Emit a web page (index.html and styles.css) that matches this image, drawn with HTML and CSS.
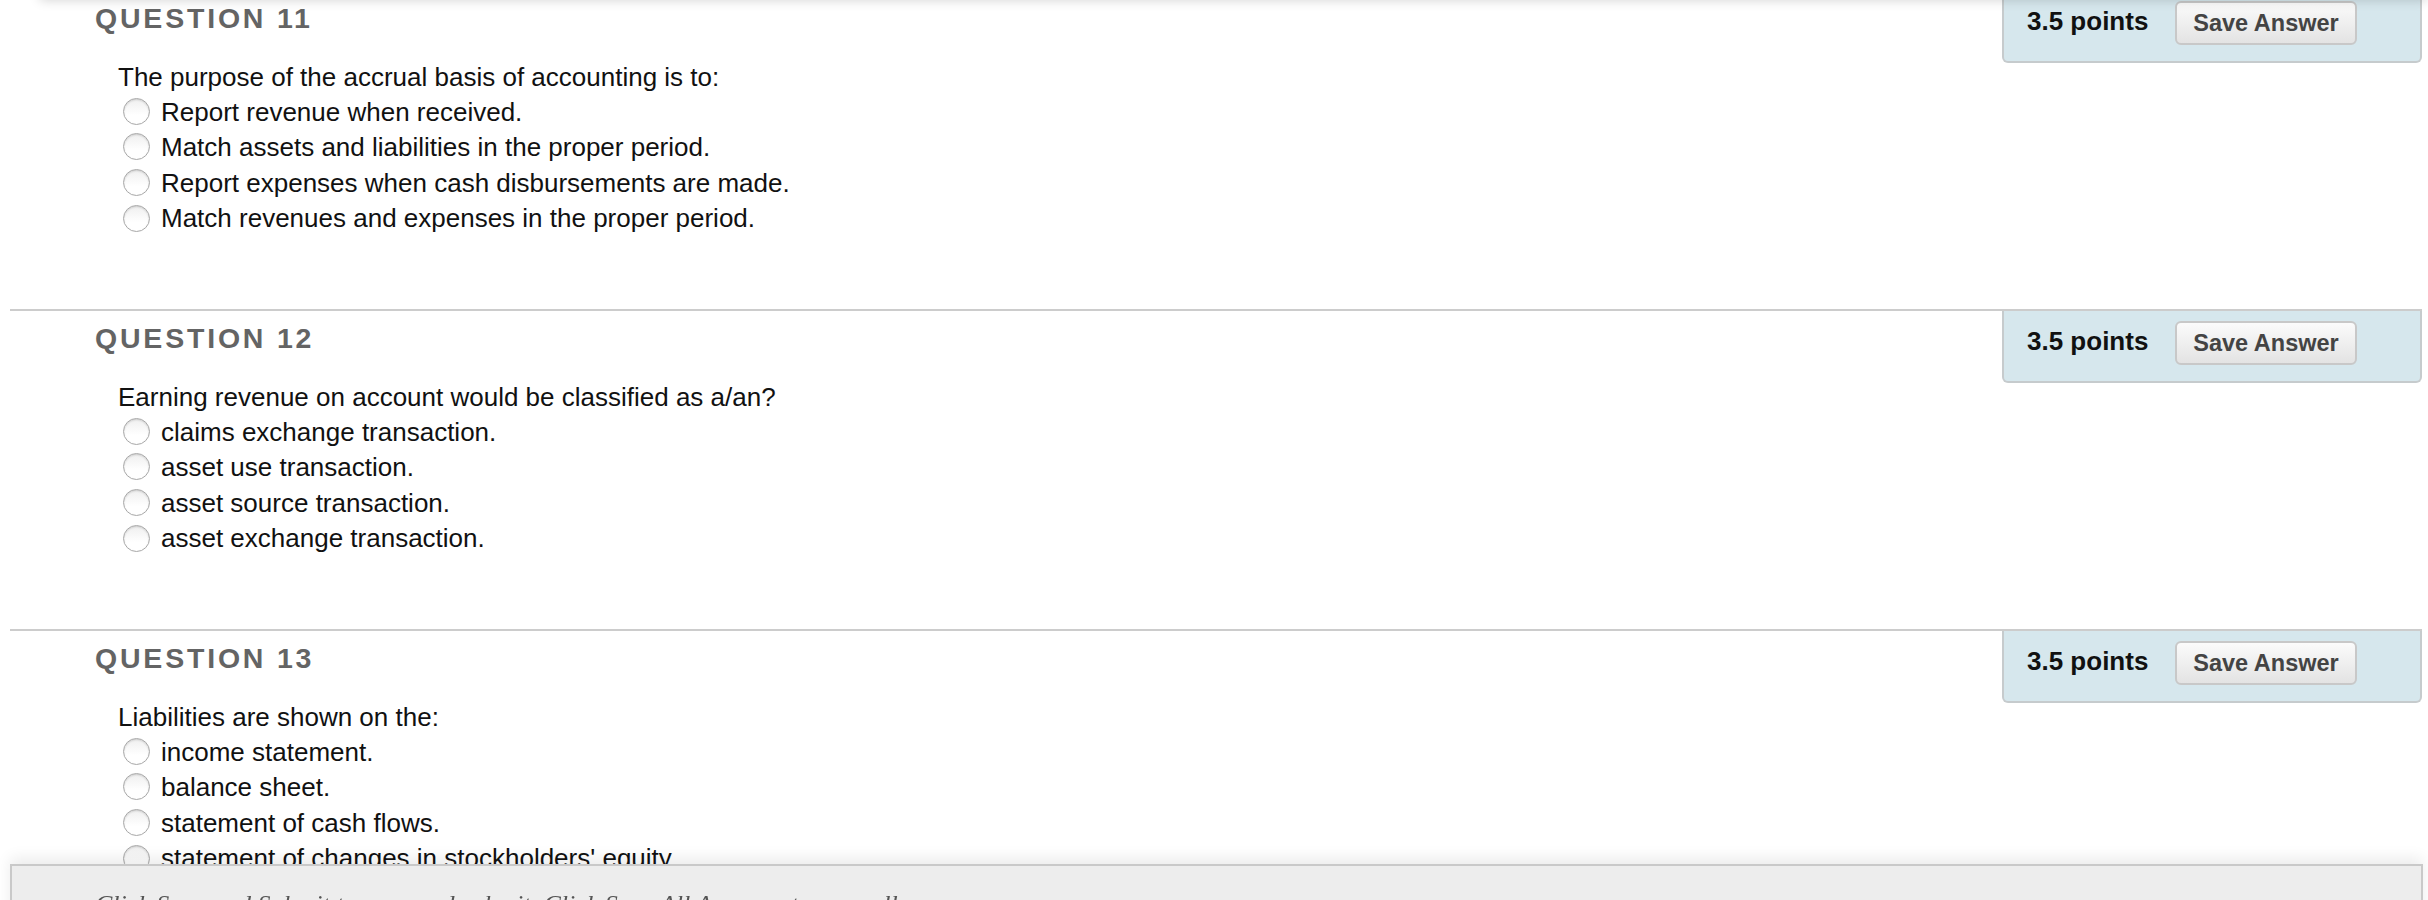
FILE: index.html
```html
<!DOCTYPE html>
<html lang="en">
<head>
<meta charset="utf-8">
<title>Questions</title>
<link rel="stylesheet" href="styles.css">
</head>
<body>
<div class="top-shade"></div>
<main class="questions">
  <section class="question">
    <div class="q-main">
      <h2 class="q-title">QUESTION 11</h2>
      <div class="q-body">
        <p class="q-text">The purpose of the accrual basis of accounting is to:</p>
        <ul class="options">
          <li class="option"><span class="radio"></span><span>Report revenue when received.</span></li>
          <li class="option"><span class="radio"></span><span>Match assets and liabilities in the proper period.</span></li>
          <li class="option"><span class="radio"></span><span>Report expenses when cash disbursements are made.</span></li>
          <li class="option"><span class="radio"></span><span>Match revenues and expenses in the proper period.</span></li>
        </ul>
      </div>
    </div>
    <div class="points-panel">
      <span class="points">3.5 points</span>
      <button class="save-btn" type="button">Save Answer</button>
    </div>
  </section>

  <section class="question">
    <div class="q-main">
      <h2 class="q-title">QUESTION 12</h2>
      <div class="q-body">
        <p class="q-text">Earning revenue on account would be classified as a/an?</p>
        <ul class="options">
          <li class="option"><span class="radio"></span><span>claims exchange transaction.</span></li>
          <li class="option"><span class="radio"></span><span>asset use transaction.</span></li>
          <li class="option"><span class="radio"></span><span>asset source transaction.</span></li>
          <li class="option"><span class="radio"></span><span>asset exchange transaction.</span></li>
        </ul>
      </div>
    </div>
    <div class="points-panel">
      <span class="points">3.5 points</span>
      <button class="save-btn" type="button">Save Answer</button>
    </div>
  </section>

  <section class="question">
    <div class="q-main">
      <h2 class="q-title">QUESTION 13</h2>
      <div class="q-body">
        <p class="q-text">Liabilities are shown on the:</p>
        <ul class="options">
          <li class="option"><span class="radio"></span><span>income statement.</span></li>
          <li class="option"><span class="radio"></span><span>balance sheet.</span></li>
          <li class="option"><span class="radio"></span><span>statement of cash flows.</span></li>
          <li class="option"><span class="radio"></span><span>statement of changes in stockholders' equity.</span></li>
        </ul>
      </div>
    </div>
    <div class="points-panel">
      <span class="points">3.5 points</span>
      <button class="save-btn" type="button">Save Answer</button>
    </div>
  </section>
</main>
<footer class="submit-bar">
  <p class="submit-note">Click Save and Submit to save and submit. Click Save All Answers to save all answers.</p>
</footer>
</body>
</html>
```
FILE: styles.css
```css
html, body {
  margin: 0;
  padding: 0;
  background: #ffffff;
  overflow: hidden;
}

body {
  font-family: "Liberation Sans", Arial, Helvetica, sans-serif;
  color: #111111;
  height: 900px;
}

.top-shade {
  position: fixed;
  top: -30px;
  left: 40px;
  right: 0;
  height: 30px;
  box-shadow: 0 0 12px rgba(0, 0, 0, 0.18);
  background: #ffffff;
  z-index: 5;
}

.questions {
  margin: -11px 6px 0 10px;
}

.question {
  box-sizing: border-box;
  height: 320px;
  border-top: 2px solid #cccccc;
  display: flex;
  justify-content: space-between;
  align-items: flex-start;
}

.q-main {
  padding-left: 85px;
}

.q-title {
  margin: 0;
  padding-top: 10px;
  font-size: 28.5px;
  line-height: 34px;
  font-weight: bold;
  letter-spacing: 2.8px;
  color: #646464;
}

.q-body {
  padding-left: 23px;
  padding-top: 25px;
  font-size: 26px;
  line-height: 35.6px;
}

.q-text {
  margin: 0;
}

.options {
  list-style: none;
  margin: -1px 0 0 0;
  padding: 0 0 0 5px;
}

.option {
  display: flex;
  align-items: center;
  gap: 11px;
  height: 35.6px;
  white-space: nowrap;
}

.radio {
  box-sizing: border-box;
  width: 27px;
  height: 27px;
  flex: none;
  margin-top: -2px;
  border-radius: 50%;
  border: 1.5px solid #a8a8a8;
  background: linear-gradient(#efefef, #ffffff 65%);
  box-shadow: inset 0 1px 2px rgba(0, 0, 0, 0.15);
}

.points-panel {
  box-sizing: border-box;
  width: 420px;
  height: 72px;
  display: flex;
  align-items: flex-start;
  gap: 28px;
  padding: 10px 0 0 23px;
  background: #d6e7ed;
  border: 2px solid #c6cbcd;
  border-top: none;
  border-radius: 0 0 6px 6px;
}

.points {
  margin-top: 5px;
  width: 120px;
  font-size: 26px;
  line-height: 30px;
  font-weight: bold;
  color: #111111;
  white-space: nowrap;
}

.save-btn {
  box-sizing: border-box;
  width: 182px;
  height: 44px;
  padding: 0;
  font-family: "Liberation Sans", Arial, Helvetica, sans-serif;
  font-size: 23.5px;
  font-weight: bold;
  color: #444444;
  background: linear-gradient(#fbfbfb, #e3e3e3);
  border: 2px solid #c8c8c8;
  border-radius: 6px;
}

.submit-bar {
  position: fixed;
  left: 10px;
  right: 5px;
  top: 864px;
  height: 60px;
  box-sizing: border-box;
  background: #ededed;
  border: 2px solid #c9c9c9;
  border-bottom: none;
  box-shadow: 0 -6px 14px rgba(0, 0, 0, 0.08);
  z-index: 10;
}

.submit-note {
  margin: 0;
  padding: 24px 0 0 83px;
  font-family: "Liberation Serif", "Times New Roman", serif;
  font-style: italic;
  font-size: 26px;
  line-height: 30px;
  color: #555555;
  white-space: nowrap;
}
```
